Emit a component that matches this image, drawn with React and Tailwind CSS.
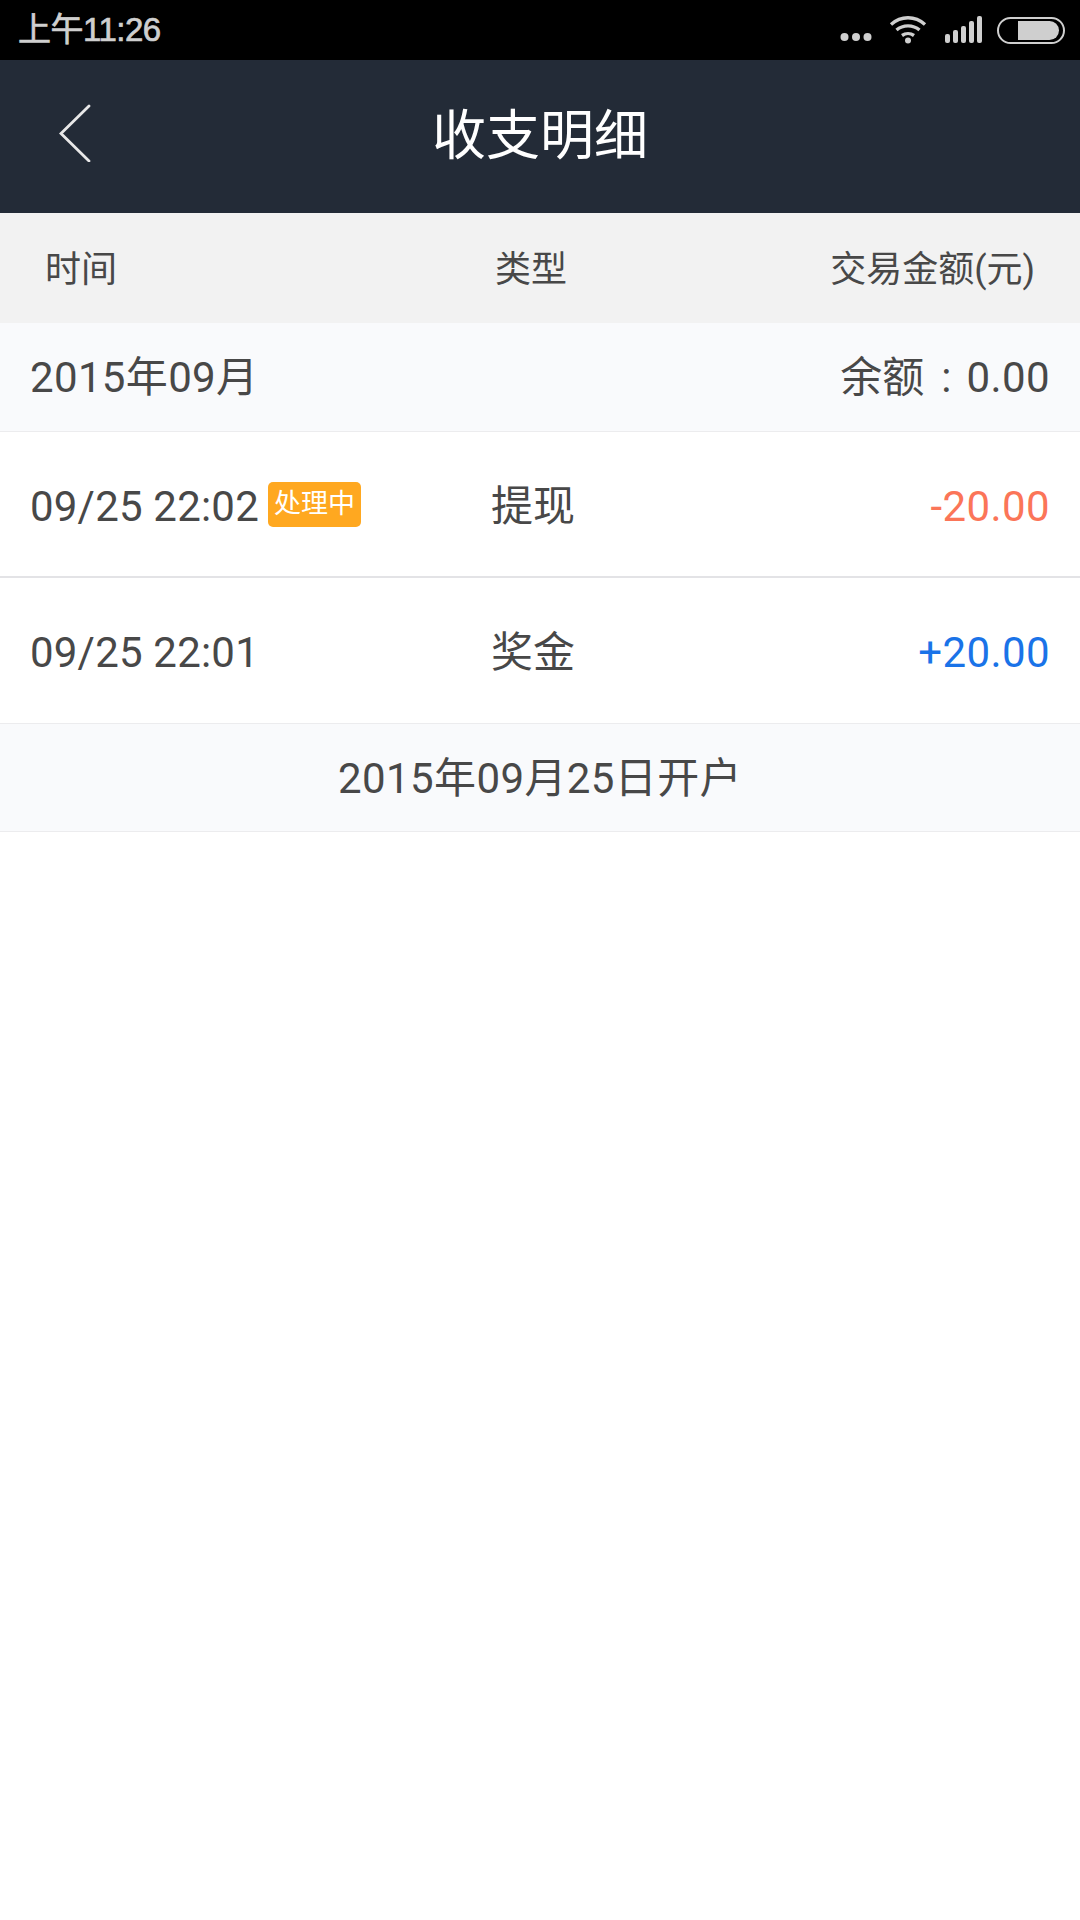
import React from 'react';

const rows = [
  { time: '09/25 22:02', badge: '处理中', type: '提现', amount: '-20.00', color: 'text-[#fb7558]', border: 'border-b-2 border-[#e3e3e6]', h: 'h-[146px]' },
  { time: '09/25 22:01', type: '奖金', amount: '+20.00', color: 'text-[#1a73e8]', border: 'border-b border-[#ececee]', h: 'h-[146px]' },
];

function StatusIcons() {
  return (
    <div className="flex items-center">
      <svg width="34" height="12" viewBox="0 0 34 12" className="mt-[14px]" fill="#cfcfcf">
        <circle cx="5.5" cy="6" r="4" />
        <circle cx="17" cy="6" r="4" />
        <circle cx="28.5" cy="6" r="4" />
      </svg>
      <svg width="38" height="30" viewBox="0 0 38 30" className="ml-[16px] mb-[2px]" fill="none" stroke="#cfcfcf" strokeWidth="3.4">
        <path d="M2 10.5C12 1.5 26 1.5 36 10.5" />
        <path d="M7.5 16C14 10.5 24 10.5 30.5 16" />
        <path d="M13 21.5C16.5 19 21.5 19 25 21.5" />
        <circle cx="19" cy="26.5" r="3" fill="#cfcfcf" stroke="none" />
      </svg>
      <svg width="38" height="28" viewBox="0 0 38 28" className="ml-[17px]" fill="#cfcfcf">
        <rect x="1" y="18" width="5" height="9" rx="2" />
        <rect x="9" y="14" width="5" height="13" rx="2" />
        <rect x="17" y="10" width="5" height="17" rx="2" />
        <rect x="25" y="5" width="5" height="22" rx="2" />
        <rect x="33" y="0" width="5" height="27" rx="2" />
      </svg>
      <svg width="68" height="27" viewBox="0 0 68 27" className="ml-[15px] mr-[15px]" fill="none">
        <rect x="1" y="1" width="66" height="25" rx="12.5" stroke="#cfcfcf" strokeWidth="2" />
        <path d="M21 4H52.5A9.5 9.5 0 0 1 52.5 23H21Z" fill="#cfcfcf" />
      </svg>
    </div>
  );
}

export default function App() {
  return (
    <div className="w-[1080px] h-[1920px] bg-white text-[#484848] font-['Roboto','Noto_Sans_CJK_SC',sans-serif]">
      <div className="h-[60px] bg-black flex items-center justify-between">
        <span className="ml-[18px] text-[33px] text-[#cfcfcf] font-['Liberation_Sans','Noto_Sans_CJK_SC',sans-serif] tracking-[-0.5px] [-webkit-text-stroke:0.7px_#cfcfcf]">上午11:26</span>
        <StatusIcons />
      </div>
      <div className="h-[153px] bg-[#232b37] relative flex items-center justify-center">
        <svg width="32" height="58" viewBox="0 0 32 58" className="absolute left-[59px] top-[44px]" fill="none" stroke="#e8e8e8" strokeWidth="2.8" strokeLinecap="round">
          <path d="M30 2L2 29.5L30 57" />
        </svg>
        <span className="text-white text-[54px]">收支明细</span>
      </div>
      <div className="h-[110px] bg-[#f2f2f2] grid grid-cols-[496px_1fr_auto] items-center pl-[45px] pr-[45px] pt-[3px] text-[36px]">
        <span>时间</span>
        <span className="-ml-[46px]">类型</span>
        <span>交易金额(元)</span>
      </div>
      <div className="h-[109px] bg-[#f9fafc] border-b border-[#ececee] flex items-center justify-between px-[30px] text-[42px]">
        <span className="tracking-[0.35px]">2015年09月</span>
        <span>余额<span className="ml-[17px] mr-[15px]">:</span><span className="tracking-[0.4px]">0.00</span></span>
      </div>
      {rows.map((row) => (
        <div key={row.time} className={`${row.h} ${row.border} grid grid-cols-[461px_1fr_auto] items-center px-[30px] pt-[4px] text-[42px]`}>
          <div className="flex items-center">
            <span className="tracking-[0.2px]">{row.time}</span>
            {row.badge && (
              <span className="ml-[9px] mb-[4px] w-[93px] h-[45px] rounded-[5px] bg-[#ffa820] text-white text-[27px] flex items-center justify-center">{row.badge}</span>
            )}
          </div>
          <span>{row.type}</span>
          <span className={`${row.color} tracking-[0.4px]`}>{row.amount}</span>
        </div>
      ))}
      <div className="h-[108px] bg-[#f9fafc] border-b border-[#ececee] flex items-center justify-center pt-[2px] text-[42px] tracking-[0.4px]">
        2015年09月25日开户
      </div>
    </div>
  );
}
